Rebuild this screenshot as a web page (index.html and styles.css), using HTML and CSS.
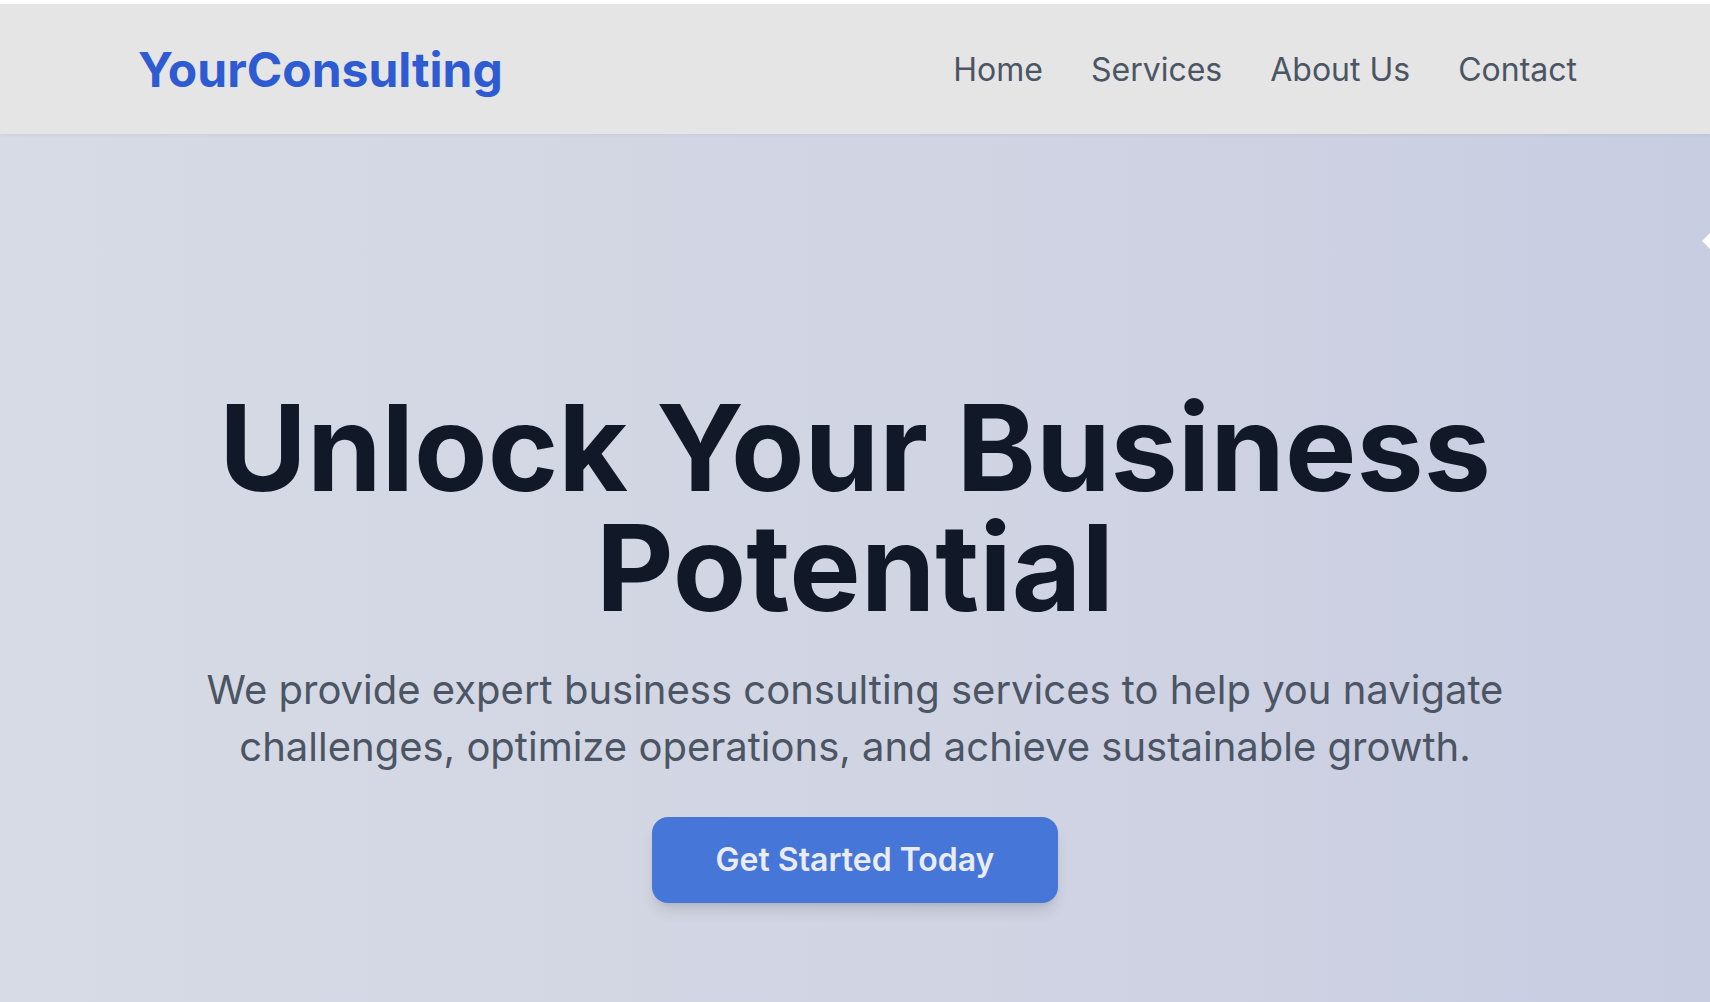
FILE: index.html
```html
<!DOCTYPE html>
<html lang="en">
<head>
<meta charset="utf-8">
<title>YourConsulting</title>
<link rel="stylesheet" href="styles.css">
</head>
<body>
<div class="page">
  <header class="site-header">
    <div class="header-inner">
      <a class="logo" href="#">YourConsulting</a>
      <nav class="nav">
        <a href="#">Home</a>
        <a href="#">Services</a>
        <a href="#">About Us</a>
        <a href="#">Contact</a>
      </nav>
    </div>
  </header>
  <section class="hero">
    <span class="edge-marker"></span>
    <div class="hero-content">
      <h1 class="hero-title">Unlock Your Business Potential</h1>
      <p class="hero-text">We provide expert business consulting services to help you navigate challenges, optimize operations, and achieve sustainable growth.</p>
      <a class="cta" href="#">Get Started Today</a>
    </div>
  </section>
</div>
</body>
</html>
```
FILE: styles.css
```css
* { box-sizing: border-box; }
html, body { margin: 0; padding: 0; }
body {
  font-family: Inter, "Noto Sans", sans-serif;
  background: #ffffff;
  overflow: hidden;
  height: 1002px;
}
.page {
  padding-top: 4px;
  height: 100%;
  display: flex;
  flex-direction: column;
}
.site-header {
  background: #e5e5e5;
  height: 130px;
  position: relative;
  z-index: 2;
  box-shadow: 0 1px 4px rgba(0,0,0,0.06);
}
.header-inner {
  max-width: 1444px;
  margin: 0 auto;
  padding-left: 5px;
  height: 100%;
  display: flex;
  align-items: center;
  justify-content: space-between;
}
.logo {
  font-size: 48px;
  font-weight: 700;
  color: #2f5bd2;
  text-decoration: none;
}
.nav {
  display: flex;
  gap: 48px;
}
.nav a {
  font-size: 32px;
  color: #4b5563;
  text-decoration: none;
}
.hero {
  position: relative;
  flex: 1;
  background: linear-gradient(90deg, #d7dbe5 0%, #d1d5e3 50%, #c9cde2 100%);
  display: flex;
  justify-content: center;
  padding-top: 254px;
}
.edge-marker {
  position: absolute;
  right: -9px;
  top: 100px;
  width: 14px;
  height: 14px;
  background: #ffffff;
  transform: rotate(45deg);
}
.hero-content {
  display: flex;
  flex-direction: column;
  align-items: center;
  text-align: center;
}
.hero-title {
  margin: 0;
  font-size: 120px;
  line-height: 120px;
  font-weight: 700;
  color: #111827;
  max-width: 1400px;
}
.hero-text {
  margin: 33px 0 0;
  font-size: 40px;
  line-height: 57px;
  color: #4b5563;
  max-width: 1340px;
}
.cta {
  margin-top: 42px;
  display: inline-block;
  background: #4676d7;
  color: #eaecf2;
  font-size: 32px;
  font-weight: 600;
  text-decoration: none;
  padding: 21px 64px;
  line-height: 44px;
  border-radius: 16px;
  box-shadow: 0 10px 15px -3px rgba(0,0,0,0.12), 0 4px 6px -4px rgba(0,0,0,0.1);
}
```
